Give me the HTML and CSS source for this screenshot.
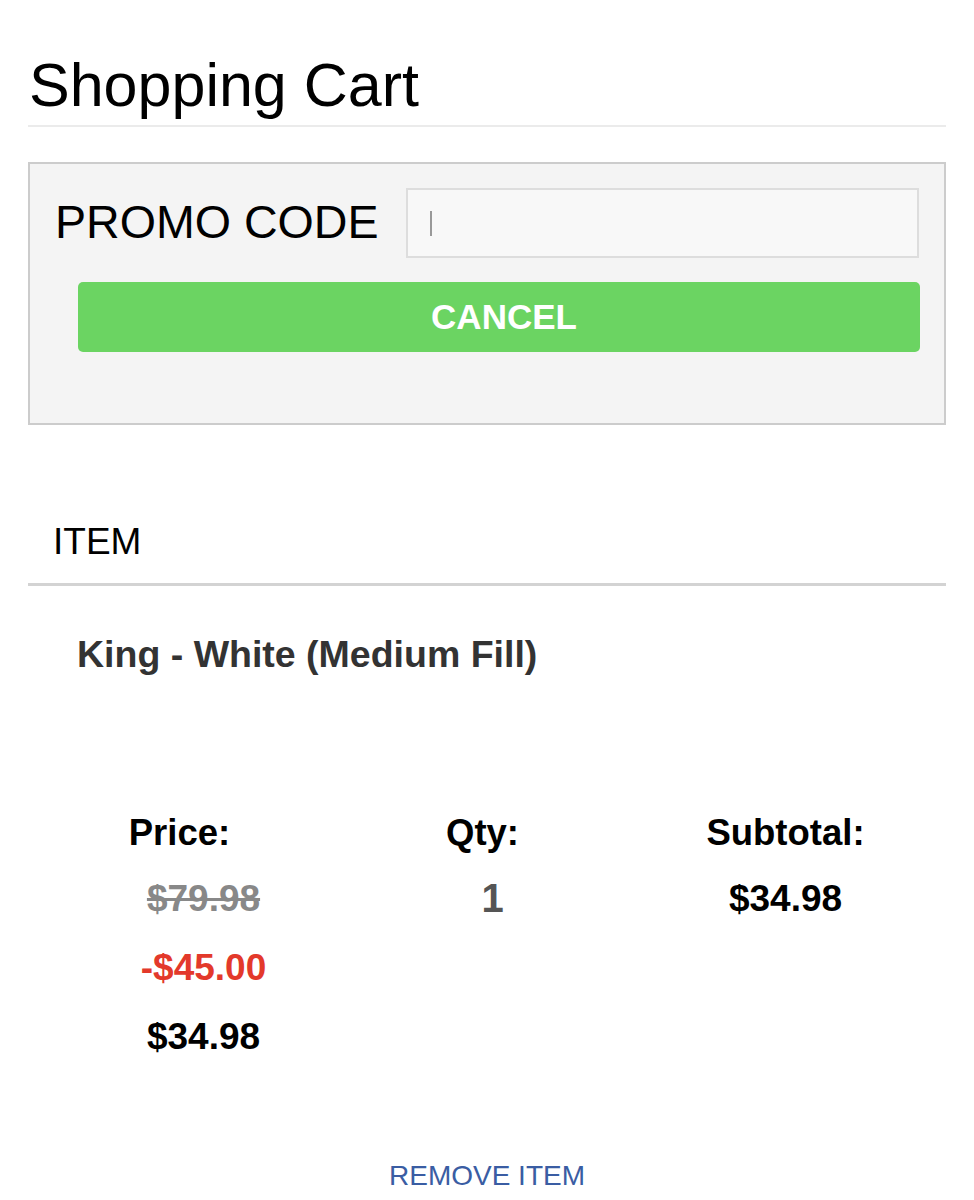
FILE: index.html
```html
<!DOCTYPE html>
<html>
<head>
<meta charset="utf-8">
<title>Shopping Cart</title>
<link rel="stylesheet" href="styles.css">
</head>
<body>
<div class="page">
  <h1 class="title">Shopping Cart</h1>

  <div class="promo">
    <div class="promo-row">
      <label class="promo-label">PROMO CODE</label>
      <div class="promo-input"><span class="caret"></span></div>
    </div>
    <button class="cancel-btn">CANCEL</button>
  </div>

  <div class="items-head">ITEM</div>

  <div class="item">
    <div class="item-name">King - White (Medium Fill)</div>
    <div class="item-grid">
      <div class="col">
        <div class="col-head">Price:</div>
        <div class="col-values price-values">
          <div class="val old">$79.98</div>
          <div class="val discount">-$45.00</div>
          <div class="val">$34.98</div>
        </div>
      </div>
      <div class="col">
        <div class="col-head">Qty:</div>
        <div class="col-values qty-values">
          <div class="val qty">1</div>
        </div>
      </div>
      <div class="col">
        <div class="col-head">Subtotal:</div>
        <div class="col-values">
          <div class="val">$34.98</div>
        </div>
      </div>
    </div>
    <div class="remove"><a class="remove-link">REMOVE ITEM</a></div>
  </div>
</div>
</body>
</html>
```

FILE: styles.css
```css
html, body {
  margin: 0;
  padding: 0;
  background: #ffffff;
}

body {
  font-family: "Liberation Sans", Arial, Helvetica, sans-serif;
  color: #000;
}

.page {
  padding: 51px 28px 0 28px;
}

.title {
  margin: 0;
  padding-left: 1px;
  font-size: 61px;
  font-weight: normal;
  line-height: 69px;
  padding-bottom: 5px;
  border-bottom: 2px solid #ebebeb;
}

.promo {
  margin-top: 35px;
  background: #f4f4f4;
  border: 2px solid #cccccc;
  padding: 24px 25px 71px 25px;
}

.promo-row {
  display: flex;
  align-items: center;
  gap: 27px;
}

.promo-label {
  font-size: 46.6px;
  line-height: 1.15;
  white-space: nowrap;
}

.promo-input {
  flex: 1;
  height: 66px;
  background: #f8f8f8;
  border: 2px solid #dddddd;
  display: flex;
  align-items: center;
  padding-left: 22px;
}

.caret {
  display: block;
  width: 2px;
  height: 25px;
  background: #999999;
}

.cancel-btn {
  display: block;
  margin: 24px 0 0 23px;
  width: calc(100% - 22px);
  height: 70px;
  border: none;
  border-radius: 5px;
  background: #6bd462;
  color: #ffffff;
  font-family: "Liberation Sans", Arial, Helvetica, sans-serif;
  font-weight: bold;
  font-size: 35px;
  padding: 0 0 0 10px;
}

.items-head {
  margin-top: 96px;
  font-size: 37px;
  line-height: 1.15;
  padding: 0 0 19px 25px;
  border-bottom: 3px solid #d3d3d3;
}

.item-name {
  margin-top: 47px;
  padding-left: 49px;
  font-size: 37.5px;
  font-weight: bold;
  line-height: 1.15;
  color: #333333;
}

.item-grid {
  margin-top: 136px;
  display: grid;
  grid-template-columns: repeat(3, 1fr);
  padding-right: 9px;
}

.col {
  text-align: center;
}

.col-head {
  font-size: 36.5px;
  font-weight: bold;
  line-height: 1.15;
}

.col-values {
  margin-top: 10px;
}

.price-values {
  padding-left: 48px;
}

.qty-values {
  padding-left: 20px;
}

.val {
  font-size: 37px;
  font-weight: bold;
  line-height: 69px;
}

.val.old {
  color: #888888;
  text-decoration: line-through;
}

.val.discount {
  color: #e3392b;
}

.val.qty {
  font-size: 40px;
  color: #555555;
}

.remove {
  margin-top: 89px;
  text-align: center;
}

.remove-link {
  font-size: 28px;
  line-height: 1.15;
  color: #3a5da3;
  text-decoration: none;
}
```
